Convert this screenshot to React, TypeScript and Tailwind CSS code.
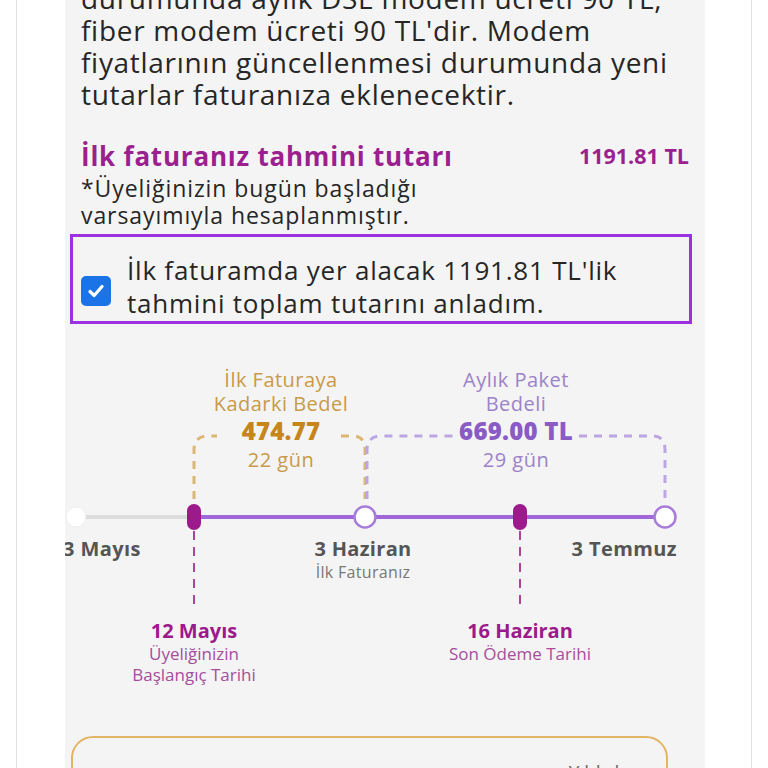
import React from "react";

const font = { fontFamily: '"Open Sans", "Noto Sans", sans-serif' };

function Timeline() {
  return (
    <div className="relative h-[360px] mt-[15px] overflow-hidden">
      <svg
        className="absolute inset-0"
        width="640"
        height="360"
        viewBox="0 0 640 360"
        fill="none"
      >
        {/* brackets */}
        <g strokeWidth="3" strokeDasharray="8 7" strokeLinecap="butt">
          <path d="M129 160 V111 Q129 97 143 97 H152" stroke="#dcb673" />
          <path d="M276 97 H288 Q300 97 300 111 V160" stroke="#dcb673" />
          <path d="M302 160 V111 Q302 97 316 97 H388" stroke="#bba6e2" />
          <path d="M514 97 H588 Q600 97 600 111 V160" stroke="#bba6e2" />
        </g>
        {/* drop lines */}
        <g stroke="#b23f98" strokeWidth="2" strokeDasharray="9 7">
          <path d="M129 192 V266" />
          <path d="M455 192 V266" />
        </g>
        {/* axis */}
        <path d="M11 178 H129" stroke="#dcdcdc" strokeWidth="4" />
        <path d="M129 178 H600" stroke="#a067d8" strokeWidth="4" />
        <circle cx="11" cy="178" r="10" fill="#ffffff" stroke="#eeeeee" strokeWidth="1" />
        <circle cx="300" cy="178" r="10.5" fill="#ffffff" stroke="#a77dd9" strokeWidth="2.5" />
        <circle cx="600" cy="178" r="10.5" fill="#ffffff" stroke="#a77dd9" strokeWidth="2.5" />
        <rect x="122" y="165" width="14" height="26" rx="7" fill="#9c1a8c" />
        <rect x="448" y="165" width="14" height="26" rx="7" fill="#9c1a8c" />
      </svg>

      {/* period labels */}
      <div className="absolute left-[216px] top-[29px] -translate-x-1/2 flex flex-col items-center whitespace-nowrap tracking-[0.03em]">
        <span className="text-[20px] leading-6 text-[#c99a48]">İlk Faturaya</span>
        <span className="text-[20px] leading-6 text-[#c99a48]">Kadarki Bedel</span>
        <span className="text-[24px] leading-[30px] font-extrabold tracking-[0.01em] text-[#c7861c]">474.77</span>
        <span className="text-[20px] leading-7 text-[#c99a48]">22 gün</span>
      </div>
      <div className="absolute left-[451px] top-[29px] -translate-x-1/2 flex flex-col items-center whitespace-nowrap tracking-[0.03em]">
        <span className="text-[20px] leading-6 text-[#9d82c9]">Aylık Paket</span>
        <span className="text-[20px] leading-6 text-[#9d82c9]">Bedeli</span>
        <span className="text-[24px] leading-[30px] font-extrabold tracking-[0.01em] text-[#8a5bc4]">669.00 TL</span>
        <span className="text-[20px] leading-7 text-[#9d82c9]">29 gün</span>
      </div>

      {/* axis labels */}
      <span className="absolute left-[-2px] top-[197px] text-[20px] leading-[26px] font-bold tracking-[0.02em] text-[#555555] whitespace-nowrap">
        3 Mayıs
      </span>
      <div className="absolute left-[298px] top-[197px] -translate-x-1/2 flex flex-col items-center whitespace-nowrap tracking-[0.02em]">
        <span className="text-[20px] leading-[26px] font-bold text-[#555555]">3 Haziran</span>
        <span className="text-[16px] leading-5 text-[#777777]">İlk Faturanız</span>
      </div>
      <span className="absolute right-[28px] top-[197px] text-[20px] leading-[26px] font-bold tracking-[0.02em] text-[#555555] whitespace-nowrap">
        3 Temmuz
      </span>

      <div className="absolute left-[129px] top-[279px] -translate-x-1/2 flex flex-col items-center whitespace-nowrap">
        <span className="text-[20px] leading-[26px] font-bold text-[#9c1a8c]">12 Mayıs</span>
        <span className="text-[17px] leading-5 text-[#a64d9c]">Üyeliğinizin</span>
        <span className="text-[17px] leading-[21px] text-[#a64d9c]">Başlangıç Tarihi</span>
      </div>
      <div className="absolute left-[455px] top-[279px] -translate-x-1/2 flex flex-col items-center whitespace-nowrap">
        <span className="text-[20px] leading-[26px] font-bold text-[#9c1a8c]">16 Haziran</span>
        <span className="text-[17px] leading-5 text-[#a64d9c]">Son Ödeme Tarihi</span>
      </div>
    </div>
  );
}

export default function App() {
  return (
    <div className="h-[768px] overflow-hidden bg-white" style={font}>
      <div className="mx-4 h-full border-x border-[#e2e2e2]">
        <div className="ml-12 w-[640px] h-full bg-[#f4f4f4] overflow-hidden">
          <p className="-mt-[18px] px-4 text-[28px] leading-8 tracking-[0.025em] text-[#262626] whitespace-nowrap">
            durumunda aylık DSL modem ücreti 90 TL,
            <br />
            fiber modem ücreti 90 TL'dir. Modem
            <br />
            fiyatlarının güncellenmesi durumunda yeni
            <br />
            tutarlar faturanıza eklenecektir.
          </p>

          <div className="mt-[30px] px-4 flex items-center justify-between">
            <span className="text-[26px] leading-8 font-bold tracking-[0.03em] text-[#9c1f8f]">
              İlk faturanız tahmini tutarı
            </span>
            <span className="text-[21.5px] leading-8 font-bold text-[#9c1f8f]">1191.81 TL</span>
          </div>
          <p className="mt-[3px] px-4 text-[23px] leading-[27px] tracking-[0.04em] text-[#262626] whitespace-nowrap">
            *Üyeliğinizin bugün başladığı
            <br />
            varsayımıyla hesaplanmıştır.
          </p>

          <label className="mt-[5px] ml-[5px] w-[622px] h-[90px] border-[3px] border-[#9d30e3] flex items-end gap-4 pl-[8px] pb-[1px]">
            <span className="mb-[14px] w-[30px] h-[30px] shrink-0 rounded-[5px] bg-[#1a74e8] flex items-center justify-center">
              <svg width="20" height="20" viewBox="0 0 20 20" fill="none">
                <path
                  d="M4 10.5 L8.2 14.5 L16 5.5"
                  stroke="#ffffff"
                  strokeWidth="3.2"
                  strokeLinecap="round"
                  strokeLinejoin="round"
                />
              </svg>
            </span>
            <span className="text-[26px] leading-[33px] tracking-[0.03em] text-[#262626] whitespace-nowrap">
              İlk faturamda yer alacak 1191.81 TL'lik
              <br />
              tahmini toplam tutarını anladım.
            </span>
          </label>

          <Timeline />

          <div className="mt-[37px] ml-[6px] w-[597px] h-[120px] rounded-[22px] border-2 border-[#e2b565] flex justify-end pr-[42px] pt-[22px]">
            <span className="text-[19px] leading-6 text-[#666666]">Yıldızlı</span>
          </div>
        </div>
      </div>
    </div>
  );
}
